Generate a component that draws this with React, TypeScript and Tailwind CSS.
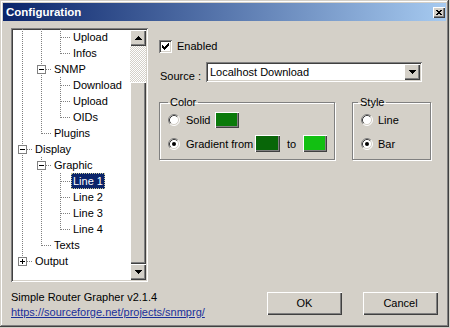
import React from "react";

const raised =
  "shadow-[inset_1px_1px_#ffffff,inset_-1px_-1px_#404040,inset_-2px_-2px_#808080]";
const sunken =
  "shadow-[inset_1px_1px_#808080,inset_-1px_-1px_#ffffff,inset_2px_2px_#404040,inset_-2px_-2px_#d4d0c8]";

type Row = {
  label: string;
  depth: number;
  exp?: "+" | "-";
  last: boolean;
  anc: boolean[];
  sel?: boolean;
};

const rows: Row[] = [
  { label: "Upload", depth: 2, last: false, anc: [true, true] },
  { label: "Infos", depth: 2, last: true, anc: [true, true] },
  { label: "SNMP", depth: 1, exp: "-", last: false, anc: [true] },
  { label: "Download", depth: 2, last: false, anc: [true, true] },
  { label: "Upload", depth: 2, last: false, anc: [true, true] },
  { label: "OIDs", depth: 2, last: true, anc: [true, true] },
  { label: "Plugins", depth: 1, last: true, anc: [true] },
  { label: "Display", depth: 0, exp: "-", last: false, anc: [] },
  { label: "Graphic", depth: 1, exp: "-", last: false, anc: [true] },
  { label: "Line 1", depth: 2, last: false, anc: [true, true], sel: true },
  { label: "Line 2", depth: 2, last: false, anc: [true, true] },
  { label: "Line 3", depth: 2, last: false, anc: [true, true] },
  { label: "Line 4", depth: 2, last: true, anc: [true, true] },
  { label: "Texts", depth: 1, last: true, anc: [true] },
  { label: "Output", depth: 0, exp: "+", last: true, anc: [] },
];

function TreeRow({ row }: { row: Row }) {
  const d = row.depth;
  const w = 20 + 19 * d;
  const x0 = 9 + 19 * d + 0.5;
  const dot = { stroke: "#808080", strokeDasharray: "1 1" };
  return (
    <div className="flex h-[16px] items-center whitespace-nowrap">
      <svg width={w} height={16} className="shrink-0" shapeRendering="crispEdges">
        {row.anc.map((c, a) =>
          c ? (
            <line key={a} x1={9 + 19 * a + 0.5} y1={0} x2={9 + 19 * a + 0.5} y2={16} {...dot} />
          ) : null
        )}
        <line x1={x0} y1={0} x2={x0} y2={row.last ? 9 : 16} {...dot} />
        <line x1={x0} y1={8.5} x2={x0 + 10} y2={8.5} {...dot} />
        {row.exp && (
          <g>
            <rect x={x0 - 4} y={4.5} width={8} height={8} fill="#ffffff" stroke="#808080" />
            <line x1={x0 - 2.5} y1={8.5} x2={x0 + 2.5} y2={8.5} stroke="#000000" />
            {row.exp === "+" && <line x1={x0} y1={6} x2={x0} y2={11} stroke="#000000" />}
          </g>
        )}
      </svg>
      {row.sel ? (
        <span className="h-[16px] leading-[14px] px-[1px] bg-[#0a246a] text-white border border-dotted border-[#c8c89a]">
          {row.label}
        </span>
      ) : (
        <span className="h-[16px] leading-[16px] px-[2px]">{row.label}</span>
      )}
    </div>
  );
}

function Arrow({ dir }: { dir: "up" | "down" }) {
  const rs = [0, 1, 2, 3].map((i) => {
    const y = dir === "up" ? i : 3 - i;
    return <rect key={i} x={3 - i} y={y} width={1 + 2 * i} height={1} fill="#000000" />;
  });
  return (
    <svg width={7} height={4} shapeRendering="crispEdges">
      {rs}
    </svg>
  );
}

function ScrollBtn({ dir }: { dir: "up" | "down" }) {
  return (
    <div className={`h-[16px] w-[16px] bg-[#d4d0c8] flex items-center justify-center ${raised}`}>
      <Arrow dir={dir} />
    </div>
  );
}

function Radio({ checked }: { checked?: boolean }) {
  return (
    <svg width={12} height={12} className="shrink-0">
      <circle cx={6} cy={6} r={5} fill="#ffffff" />
      <path d="M2.11 9.89 A5.5 5.5 0 0 1 9.89 2.11" fill="none" stroke="#808080" />
      <path d="M9.89 2.11 A5.5 5.5 0 0 1 2.11 9.89" fill="none" stroke="#ffffff" />
      <path d="M2.82 9.18 A4.5 4.5 0 0 1 9.18 2.82" fill="none" stroke="#404040" />
      <path d="M9.18 2.82 A4.5 4.5 0 0 1 2.82 9.18" fill="none" stroke="#d4d0c8" />
      {checked && <circle cx={6} cy={6} r={2} fill="#000000" />}
    </svg>
  );
}

function Checkbox() {
  const cols = [2, 3, 4, 3, 2, 1, 0];
  return (
    <div className={`w-[13px] h-[13px] bg-white shrink-0 ${sunken}`}>
      <svg width={13} height={13} shapeRendering="crispEdges">
        {cols.map((y, c) => (
          <rect key={c} x={3 + c} y={3 + y} width={1} height={3} fill="#000000" />
        ))}
      </svg>
    </div>
  );
}

function Swatch({ color, w, h }: { color: string; w: string; h: string }) {
  return (
    <div className={`${w} ${h} ${color} shrink-0 shadow-[inset_1px_1px_#ffffff,inset_-1px_-1px_#404040,inset_-2px_-2px_#808080]`} />
  );
}

export default function App() {
  return (
    <div className="w-[450px] h-[328px] bg-[#d4d0c8] overflow-hidden font-['Liberation_Sans',Arial,sans-serif] text-[11px] text-black">
      <div className="w-[449px] h-[327px] p-[3px] flex flex-col shadow-[inset_-1px_-1px_#404040,inset_1px_1px_#d4d0c8,inset_-2px_-2px_#808080,inset_2px_2px_#ffffff]">
        {/* Title bar */}
        <div className="h-[18px] flex items-center justify-between pl-[3px] pr-[1px] bg-[linear-gradient(to_right,#0a246a,#a6caf0)]">
          <span className="text-white font-bold text-[11.5px] leading-[18px]">Configuration</span>
          <div className={`w-[12px] h-[11px] bg-[#d4d0c8] flex items-center justify-center ${raised}`}>
            <svg width={6} height={5} shapeRendering="crispEdges">
              <path d="M0 0 L6 5 M6 0 L0 5" stroke="#000000" strokeWidth={1.2} />
            </svg>
          </div>
        </div>

        {/* Body */}
        <div className="flex pl-[8px] pt-[7px]">
          {/* Tree */}
          <div className={`w-[137px] h-[254px] bg-white p-[2px] flex shrink-0 ${sunken}`}>
            <div className="w-[117px] h-[250px] overflow-hidden flex flex-col -mt-[1px]">
              {rows.map((r, i) => (
                <TreeRow key={i} row={r} />
              ))}
            </div>
            <div className="w-[16px] h-[250px] flex flex-col">
              <ScrollBtn dir="up" />
              <div className="h-[36px] bg-[image:repeating-conic-gradient(#d4d0c8_0%_25%,#ffffff_0%_50%)] bg-[length:2px_2px]" />
              <div className={`h-[182px] bg-[#d4d0c8] ${raised}`} />
              <ScrollBtn dir="down" />
            </div>
          </div>

          {/* Right panel */}
          <div className="flex flex-col pl-[11px] pt-[12px]">
            <div className="flex items-center h-[13px]">
              <Checkbox />
              <span className="ml-[5px] leading-[13px]">Enabled</span>
            </div>

            <div className="flex items-start mt-[9px]">
              <span className="w-[47px] pl-[1px] mt-[8px] leading-[13px]">Source :</span>
              <div className={`w-[216px] h-[20px] bg-white flex items-center p-[2px] ${sunken}`}>
                <span className="flex-1 pl-[2px] leading-[16px] bg-white">Localhost Download</span>
                <ScrollBtn dir="down" />
              </div>
            </div>

            <div className="flex mt-[13px] gap-[17px]">
              <fieldset className="w-[176px] h-[64px] m-0 p-0 min-w-0 border border-[#808080] shadow-[inset_1px_1px_#ffffff,1px_1px_#ffffff]">
                <legend className="ml-[8px] px-[2px] leading-[13px]">Color</legend>
                <div className="flex flex-col pl-[8px] mt-[3px]">
                  <div className="flex items-center h-[16px]">
                    <Radio />
                    <span className="ml-[6px] w-[29px] leading-[16px]">Solid</span>
                    <Swatch color="bg-[#0a7a0a]" w="w-[24px]" h="h-[16px]" />
                  </div>
                  <div className="flex items-center h-[17px] mt-[7px]">
                    <Radio checked />
                    <span className="ml-[6px] w-[69px] leading-[16px]">Gradient from</span>
                    <Swatch color="bg-[#086608]" w="w-[25px]" h="h-[17px]" />
                    <span className="ml-[7px] w-[16px] leading-[16px]">to</span>
                    <Swatch color="bg-[#12c012]" w="w-[24px]" h="h-[17px]" />
                  </div>
                </div>
              </fieldset>

              <fieldset className="w-[79px] h-[64px] m-0 p-0 min-w-0 border border-[#808080] shadow-[inset_1px_1px_#ffffff,1px_1px_#ffffff]">
                <legend className="ml-[5px] px-[2px] leading-[13px]">Style</legend>
                <div className="flex flex-col pl-[8px] mt-[3px]">
                  <div className="flex items-center h-[16px]">
                    <Radio />
                    <span className="ml-[5px] leading-[16px]">Line</span>
                  </div>
                  <div className="flex items-center h-[17px] mt-[7px]">
                    <Radio checked />
                    <span className="ml-[5px] leading-[16px]">Bar</span>
                  </div>
                </div>
              </fieldset>
            </div>
          </div>
        </div>

        {/* Bottom row */}
        <div className="flex justify-between mt-[8px] pl-[8px] pr-[8px]">
          <div className="flex flex-col leading-[15px]">
            <span>Simple Router Grapher v2.1.4</span>
            <span className="text-[#1a2f9a] underline">https://sourceforge.net/projects/snmprg/</span>
          </div>
          <div className="flex gap-[21px] mt-[2px]">
            <div className={`w-[75px] h-[23px] bg-[#d4d0c8] flex items-center justify-center ${raised}`}>OK</div>
            <div className={`w-[75px] h-[23px] bg-[#d4d0c8] flex items-center justify-center ${raised}`}>Cancel</div>
          </div>
        </div>
      </div>
    </div>
  );
}
